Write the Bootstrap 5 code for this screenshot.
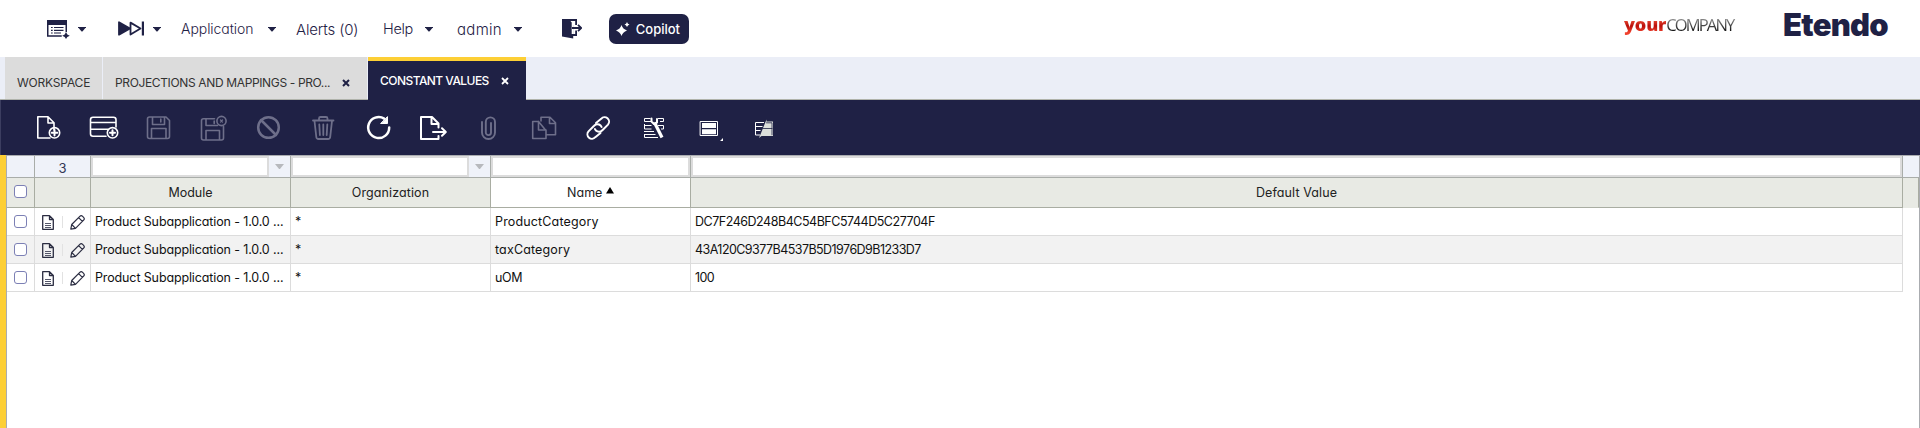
<!DOCTYPE html>
<html lang="en">
<head>
<meta charset="utf-8">
<meta name="viewport" content="width=device-width, initial-scale=1">
<title>Etendo - Constant Values</title>
<link rel="stylesheet" href="https://cdn.jsdelivr.net/npm/bootstrap@5.3.0/dist/css/bootstrap.min.css">
<style>
:root{--navy:#1f2145;--yellow:#fdcf35;--line:#b0b3ab;--soft:#dcdcdc}
body{font-family:Inter,"Open Sans",sans-serif;font-feature-settings:"cv11";font-size:12.5px;line-height:1;color:#111;background:#fff;height:428px;overflow:hidden}
svg{display:block;flex:none}
.topbar{height:57px;padding:1px 32px 0 47px;color:var(--navy)}
.entry{height:30px;flex:none;display:flex;align-items:center;justify-content:space-between;white-space:nowrap;color:var(--navy);text-decoration:none;font-size:15px;font-weight:350}
.caret-d{width:8px;height:5px;background:var(--navy);clip-path:polygon(0 0,100% 0,100% 15%,55% 100%,45% 100%,0 15%)}
.copilot{width:80px;height:30px;border-radius:7px;background:var(--navy);color:#fff;font-size:13px;font-weight:500;padding:0 9px 0 7px}
.company{font:16.5px "Open Sans",sans-serif;width:159px;padding-bottom:9px}
.company b,.company span{background:linear-gradient(#f0523a 30%,#b80f0a 58%,#f0402c 85%);-webkit-background-clip:text;background-clip:text;color:transparent;line-height:24px;display:inline-block}
.company b{font-weight:800;font-size:18px;letter-spacing:-.2px}
.company span{font-weight:400;letter-spacing:-1.85px;background-image:linear-gradient(#888 25%,#111 75%);padding-right:3px}
.etendo{font-size:31px;font-weight:900;letter-spacing:-.75px;padding-bottom:9px}
.tabstrip{height:43px;background:#ebeef7;padding-left:5px;border-bottom:1px solid var(--line);font-size:12px}
.tab{height:42px;background:#dcdcdc;color:#333;padding:10px 12px 0;white-space:nowrap}
.tab.current{height:43px;background:var(--navy);color:#fff;border-top:4px solid var(--yellow);padding-top:1px;font-weight:500;position:relative;z-index:1}
.toolbar{height:55px;background:var(--navy);padding-left:21px;border-left:1px solid #3c3e60;color:#fff}
.toolbar svg{fill:none;stroke:currentColor;stroke-width:1.6;stroke-linejoin:round;stroke-linecap:round}
.toolbar .off{color:#6e6f8a}
.side{width:6px;background:var(--yellow)}
.panel{height:273px;border:1px solid #aaacb0;border-bottom:0}
.grid{table-layout:fixed;width:1912px;border-collapse:separate;border-spacing:0}
.grid th,.grid td{border:solid var(--soft);border-width:0 1px 1px 0;padding:2px 4px 0;height:28px;font-weight:400;white-space:nowrap;vertical-align:middle;overflow:hidden}
.grid td:first-child,.grid .titles th:first-child{padding-top:0}
.grid td:last-child{border:0}
.grid tbody tr:nth-child(even) td:not(:last-child){background:#f2f2f2}
.grid .filters th{height:22px;padding:0;background:#eff2f9;border-color:#a9ada9}
.grid .filters th.total{padding-top:3px;font-size:13px;color:#333656}
.grid .titles th{height:30px;background:#e8eae4;border-color:#a9ada2;text-align:center;color:#222}
.grid .titles th.sorted{background:#fff}
.grid .titles th:last-child{border-bottom-color:#e8eae4}
.grid .filters th:last-child{border-right:0}
.field{height:21px;border:2px solid var(--soft);background:#fff;flex:1}
.drop{width:21px}
.drop::after{content:"";display:block;margin:0 auto 0 6px;width:9px;height:5px;background:#b7b9bd;clip-path:polygon(0 0,100% 0,55% 100%,45% 100%)}
.tick{display:block;width:13px;height:13px;border:1px solid #7c80b5;border-radius:3px;background:#fff;margin-left:3px;appearance:none}
.titles .tick{margin-top:-3px}
.tools{padding-left:3px}
.sep{width:1px;height:12px;background:#e2e2e2;margin:0 7px 2px 8px}
</style>
</head>
<body>
<nav class="topbar d-flex align-items-center">
  <a class="entry" style="width:39px;margin-right:32px"><svg width="23" height="20" viewBox="47 20 23 20"><path fill="#1f2145" d="M47 21h20v5H47z"/><path fill="none" stroke="#1f2145" stroke-width="1.500" d="M47.750 25v12h14M66.250 25v8"/><path stroke="#1f2145" stroke-width="1.200" d="M51 28.500h1.700M54 28.500h9.500M51 31.300h1.700M54 31.300h9.500M51 34h1.700M54 34h7"/><path fill="#1f2145" d="m66 33 1.300 2.400 2.500 1.300-2.500 1.300L66 40l-1.300-2-2.500-1.300 2.500-1.300z"/></svg><i class="caret-d"></i></a>
  <a class="entry" style="width:43px;margin-right:20px"><svg width="26" height="16" viewBox="118 22 26 16" fill="none" stroke="#1f2145" stroke-width="1.8"><path fill="#1f2145" stroke-linejoin="round" d="M119 23.300v12.400l11-6.200z"/><path stroke-linejoin="round" d="M130.500 23.600v11.900l10-6z"/><path stroke-width="2.200" d="M142.900 22.500v14"/></svg><i class="caret-d"></i></a>
  <a class="entry" style="width:95px;margin-right:20px;font-size:14px;letter-spacing:-.05px">Application<i class="caret-d"></i></a>
  <a class="entry" style="width:65px;margin-right:22px;letter-spacing:-.15px">Alerts (0)</a>
  <a class="entry" style="width:50px;margin-right:24px;font-size:14.5px;letter-spacing:-.3px">Help<i class="caret-d"></i></a>
  <a class="entry" style="width:65px;margin-right:40px;letter-spacing:.3px">admin<i class="caret-d"></i></a>
  <a class="entry" style="width:20px;margin-right:27px"><svg width="20" height="20" viewBox="562 19 20 20"><path fill="#1f2145" d="M562 19h15v6h-1.800v-4h-4l2 1.500V34h2v-3.500h1.800V36h-3.800v2.500L562 36.500z"/><path fill="none" stroke="#1f2145" stroke-width="1.800" d="M573 28h8M578 24.800l3.200 3.200-3.200 3.200"/><path fill="#fff" d="M570.500 21h4.500v4h-1.500v2h-1.500v2h1.500v5h-1.800V22.500z"/></svg></a>
  <a class="copilot d-flex align-items-center justify-content-between text-decoration-none"><svg width="16" height="16" viewBox="617 21 16 16" fill="#fff"><path d="M622.500 25q1.200 4 5.500 5.500-4.300 1.500-5.500 5.500-1.200-4-5.500-5.500 4.300-1.500 5.500-5.500zM628 22q.6 2 2.500 2.500-1.900.5-2.500 2.500-.6-2-2.500-2.500 1.900-.5 2.500-2.500z"/></svg>Copilot</a>
  <div class="company ms-auto"><b>your</b><span>COMPANY</span></div>
  <div class="etendo">Etendo</div>
</nav>
<div class="tabstrip d-flex">
  <div class="tab d-flex align-items-center" style="width:97px;letter-spacing:-.2px">WORKSPACE</div>
  <div class="tab d-flex align-items-center justify-content-between" style="width:264px;margin:0 1px;letter-spacing:-.36px;padding-right:17px"><span>PROJECTIONS AND MAPPINGS - PRO...</span><svg width="8" height="8" stroke="#1f2145" stroke-width="2"><path d="m1 1 6 6M7 1 1 7"/></svg></div>
  <div class="tab current d-flex align-items-center justify-content-between" style="width:158px;letter-spacing:-.55px;padding-right:17px"><span>CONSTANT VALUES</span><svg width="8" height="8" stroke="#fff" stroke-width="1.800"><path d="m1 1 6 6M7 1 1 7"/></svg></div>
</div>
<div class="toolbar d-flex">
  <svg width="55" height="55" viewBox="22 100 55 55"><path d="M50 138H37.800v-21.200H48l6 6V130M48 117v6h6"/><circle cx="54.500" cy="132.800" r="5.200"/><path d="M54.500 130v5.600M51.700 132.800h5.600" stroke-width="2"/></svg>
  <svg width="55" height="55" viewBox="77 100 55 55"><path d="M106 136.200H93a2.500 2.500 0 0 1-2.500-2.500v-14a2.500 2.500 0 0 1 2.500-2.500h20.500a2.500 2.500 0 0 1 2.500 2.500V127M90.500 122.500H116M90.500 129.300H108"/><circle cx="112.500" cy="132.800" r="5.200"/><path d="M112.500 130.300v5M110 132.800h5" stroke-width="2"/></svg>
  <svg class="off" width="55" height="55" viewBox="132 100 55 55"><path d="M149.500 117H166l3.500 3.500v16a2 2 0 0 1-2 2h-18a2 2 0 0 1-2-2V119a2 2 0 0 1 2-2zM152.500 117v7.500h12V117M151.500 138v-9.500H166v9.500M160.800 119v3"/></svg>
  <svg class="off" width="55" height="55" viewBox="187 100 55 55"><path d="M214.500 118.700h-11a2 2 0 0 0-2 2V138a2 2 0 0 0 2 2h18a2 2 0 0 0 2-2v-11.500M206 119v6.500h11.500M206 139.500v-9h13.500v9M214.200 121v2.500"/><circle cx="221.500" cy="121" r="4.600"/><path d="m220.500 120 2 2m0-2-2 2" stroke-width="1.200"/></svg>
  <svg class="off" width="55" height="55" viewBox="242 100 55 55"><g stroke-width="2.500"><circle cx="268.500" cy="127.500" r="10.300"/><path d="m261 120 15 15"/></g></svg>
  <svg class="off" width="55" height="55" viewBox="297 100 55 55"><path stroke-width="1.800" d="M313 120.500h20.500M319 120v-1.500a1.500 1.500 0 0 1 1.500-1.500h5.500a1.500 1.500 0 0 1 1.500 1.500v1.500M314.500 121l1.800 16a2.200 2.200 0 0 0 2.200 2h9.500a2.200 2.200 0 0 0 2.200-2l1.800-16M319.300 124.500l.6 10.500M323.300 124.500V135M327.300 124.500l-.6 10.500"/></svg>
  <svg width="55" height="55" viewBox="352 100 55 55"><path stroke-width="2.500" d="M389.200 127.500a10.500 10.500 0 1 1-5-8.900"/><path d="M387.500 117v6.500h-6.500z" fill="#fff" stroke-width="1"/></svg>
  <svg width="55" height="55" viewBox="407 100 55 55"><path stroke-width="2" d="M438.500 136v3H421v-22h11l6.500 6.500v4M431.500 117.500v6.500h6.500M433 132h12.500M442 128.300l3.800 3.700-3.800 3.700"/></svg>
  <svg class="off" width="55" height="55" viewBox="462 100 55 55"><path stroke-width="1.900" d="M482 122v10.500a6.500 6.500 0 0 0 13 0v-10.500a4.600 4.600 0 0 0-9.200 0v10.500a2.600 2.600 0 0 0 5.200 0V123"/></svg>
  <svg class="off" width="55" height="55" viewBox="517 100 55 55"><path d="M538.500 121.500h-5.800v17H546v-8.500M538.500 121.500l7 8.500h-7v-8M541 121v-3.800h9l5.500 5.500v12H546M549.500 117.500v6h6"/></svg>
  <svg width="55" height="55" viewBox="572 100 55 55"><g stroke-width="2"><path d="m596 123 5.200-4.200a4.400 4.400 0 0 1 6.800 5.800l-5.600 5.600a4.700 4.700 0 0 1-6.500.3l-1-1.500"/><path d="m600.500 133-5.200 4.200a4.400 4.400 0 0 1-6.800-5.800l5.600-5.600a4.700 4.700 0 0 1 6.500-.3l1 1.500"/></g></svg>
  <svg width="55" height="55" viewBox="627 100 55 55"><g stroke-width="1" stroke-linecap="butt" stroke-linejoin="miter"><path d="M650.500 118.500h-6v3h7M658 118.500h5.500v3H660M644.500 124v5h7M644.500 125.500h7M658 125.500h5.500v3.500H661M644 131.500h10M644.500 134v3.500H658M644.500 134.500h11"/></g><path stroke-width="3.200" stroke-linecap="butt" d="m654.500 122.500 7.500 15"/><path stroke-width="2" d="M651.500 118.500v3l2.500 2.500 3-1.500v-3.500"/></svg>
  <svg width="55" height="55" viewBox="682 100 55 55"><path stroke-width="1" stroke-linejoin="miter" d="M700.500 121.500h17v14h-17z"/><path fill="#fff" stroke="none" d="M702 123h14v5h-14zM702 129.300h14v4.900h-14zM723 138v3h-3z"/></svg>
  <svg width="55" height="55" viewBox="737 100 55 55"><path stroke-width="1" stroke-linejoin="miter" stroke-linecap="butt" d="M764 122.500h-8.500v12.500h4.500M755.500 126.500h7M755.500 130.500h5"/><path fill="#dcdfdc" stroke="none" d="M766.500 119.500v2H773V136h-11.500l-2.500 2z"/><path stroke="#1f2145" stroke-width=".8" d="M763 128.500h9M766.500 122.800h5.500v12"/></svg>
</div>
<main class="d-flex">
  <div class="side"></div>
  <div class="panel flex-grow-1">
    <table class="grid">
      <colgroup><col style="width:28px"><col style="width:56px"><col style="width:200px"><col style="width:200px"><col style="width:200px"><col style="width:1212px"><col style="width:16px"></colgroup>
      <thead>
        <tr class="filters"><th></th><th class="total text-center">3</th>
          <th><div class="d-flex align-items-center"><div class="field"></div><div class="drop"></div></div></th>
          <th><div class="d-flex align-items-center"><div class="field"></div><div class="drop"></div></div></th>
          <th><div class="field"></div></th><th><div class="field"></div></th><th></th></tr>
        <tr class="titles"><th><input type="checkbox" class="tick"></th><th></th><th>Module</th><th style="letter-spacing:.1px">Organization</th><th class="sorted">Name <svg class="d-inline-block align-baseline" width="8" height="10" viewBox="0 0 8 10"><path d="M4 0 8 6.500H0z"/></svg></th><th style="letter-spacing:.1px">Default Value</th><th></th></tr>
      </thead>
      <tbody id="rows"></tbody>
    </table>
  </div>
</main>
<template id="tools">
  <div class="tools d-flex align-items-center">
    <svg width="12" height="15" viewBox="0 0 12 15" fill="none" stroke="#2b2d42" stroke-width="1.300"><path stroke-linejoin="round" d="M.7.700h6.800l3.800 3.800v9.800H.7zM7.500 1v3.500H11"/><path stroke="#55576a" stroke-width="1" d="M3 8.500h6M3 10.500h6M3 12.500h6"/></svg>
    <i class="sep"></i>
    <svg width="15" height="15" viewBox="0 0 15 15" fill="none" stroke="#2b2d42" stroke-width="1.200" stroke-linejoin="round"><path d="M.8 14.200l.9-4.700L9.800 1.400a2 2 0 0 1 2.800 0l1 1a2 2 0 0 1 0 2.800l-8.100 8.100zM8.600 2.600l3.800 3.800M1.700 9.500l3.800 3.800"/></svg>
  </div>
</template>
<script src="https://cdn.jsdelivr.net/npm/bootstrap@5.3.0/dist/js/bootstrap.bundle.min.js"></script>
<script>
// name, name tracking, value, value tracking
const records = [
  ['ProductCategory', .15, 'DC7F246D248B4C54BFC5744D5C27704F', -.47],
  ['taxCategory', .15, '43A120C9377B4537B5D1976D9B1233D7', -.55],
  ['uOM', -.4, '100', -.6]
];
const tools = document.getElementById('tools').innerHTML;
document.getElementById('rows').innerHTML = records.map(([name, a, value, b]) => `<tr>
  <td><input type="checkbox" class="tick"></td><td>${tools}</td>
  <td style="letter-spacing:-.13px">Product Subapplication - 1.0.0 ...</td><td>*</td>
  <td style="letter-spacing:${a}px">${name}</td><td style="letter-spacing:${b}px">${value}</td><td></td></tr>`).join('');
</script>
</body>
</html>
